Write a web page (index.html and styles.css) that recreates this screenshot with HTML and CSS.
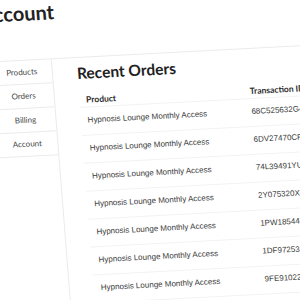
FILE: index.html
```html
<!DOCTYPE html>
<html lang="en">
<head>
    <meta charset="UTF-8">
    <title>Account</title>
    <link rel="stylesheet" href="styles.css">
</head>
<body>
    <div class="page">
        <header class="top">
            <h1 class="title">Account</h1>
        </header>
        <div class="layout">
            <ul class="side-nav">
                <li>Products</li>
                <li>Orders</li>
                <li>Billing</li>
                <li>Account</li>
            </ul>
            <main class="content">
                <h2 class="section-title">Recent Orders</h2>
                <div class="orders">
                    <div class="row head">
                        <div>Product</div>
                        <div>Transaction ID</div>
                    </div>
                    <div class="row"><div>Hypnosis Lounge Monthly Access</div><div>68C525632G4817305</div></div>
                    <div class="row"><div>Hypnosis Lounge Monthly Access</div><div>6DV27470CF2290114</div></div>
                    <div class="row"><div>Hypnosis Lounge Monthly Access</div><div>74L39491YU8820357</div></div>
                    <div class="row"><div>Hypnosis Lounge Monthly Access</div><div>2Y075320XK1192846</div></div>
                    <div class="row"><div>Hypnosis Lounge Monthly Access</div><div>1PW18544RT5503921</div></div>
                    <div class="row"><div>Hypnosis Lounge Monthly Access</div><div>1DF97253MA7740268</div></div>
                    <div class="row"><div>Hypnosis Lounge Monthly Access</div><div>9FE91022BD3361490</div></div>
                    <div class="row"><div>Hypnosis Lounge Monthly Access</div><div>9LH8935SWC0047713</div></div>
                    <div class="row"><div>Hypnosis Lounge Monthly Access</div><div>3KM22815TE6618402</div></div>
                </div>
            </main>
        </div>
    </div>
</body>
</html>
```

FILE: styles.css
```css
/* styles.css */

body {
    margin: 0;
    padding: 0;
    background-color: #ffffff;
    overflow: hidden;
    font-family: "Liberation Sans", Arial, sans-serif;
    color: #3a3a3a;
}

.page {
    width: 440px;
    margin-left: -14px;
    transform-origin: 14px 0;
    transform: rotate(-3deg) skewX(1.5deg);
}

.top {
    height: 61px;
    border-bottom: 1px solid #ebebeb;
}

.title {
    margin: 0 0 0 -7px;
    padding: 2px 0 0 0;
    font-family: Lato, sans-serif;
    font-weight: 700;
    font-size: 20px;
    line-height: 24px;
    color: #222222;
}

.layout {
    display: flex;
}

.side-nav {
    list-style: none;
    margin: 0;
    padding: 0;
    width: 60px;
}

.side-nav li {
    height: 23px;
    line-height: 23px;
    border-bottom: 1px solid #ebebeb;
    text-align: center;
    font-family: Lato, sans-serif;
    font-size: 8px;
    color: #444444;
}

.content {
    flex: 1;
    border-left: 1px solid #ebebeb;
    padding: 7px 0 0 24px;
    min-height: 300px;
}

.section-title {
    margin: 0;
    font-family: Lato, sans-serif;
    font-weight: 700;
    font-size: 15.5px;
    line-height: 17px;
    color: #222222;
}

.orders {
    margin-top: 9px;
}

.row {
    display: grid;
    grid-template-columns: 164px 1fr;
    border-bottom: 1px solid #f2f2f2;
    font-size: 8px;
    line-height: 10px;
}

.row div {
    padding: 8.3px 7px 8.7px;
    white-space: nowrap;
}

.row.head div {
    padding: 4px 7px 2px;
    font-family: Lato, sans-serif;
    font-weight: 700;
    font-size: 8.5px;
    color: #2a2a2a;
}
```
